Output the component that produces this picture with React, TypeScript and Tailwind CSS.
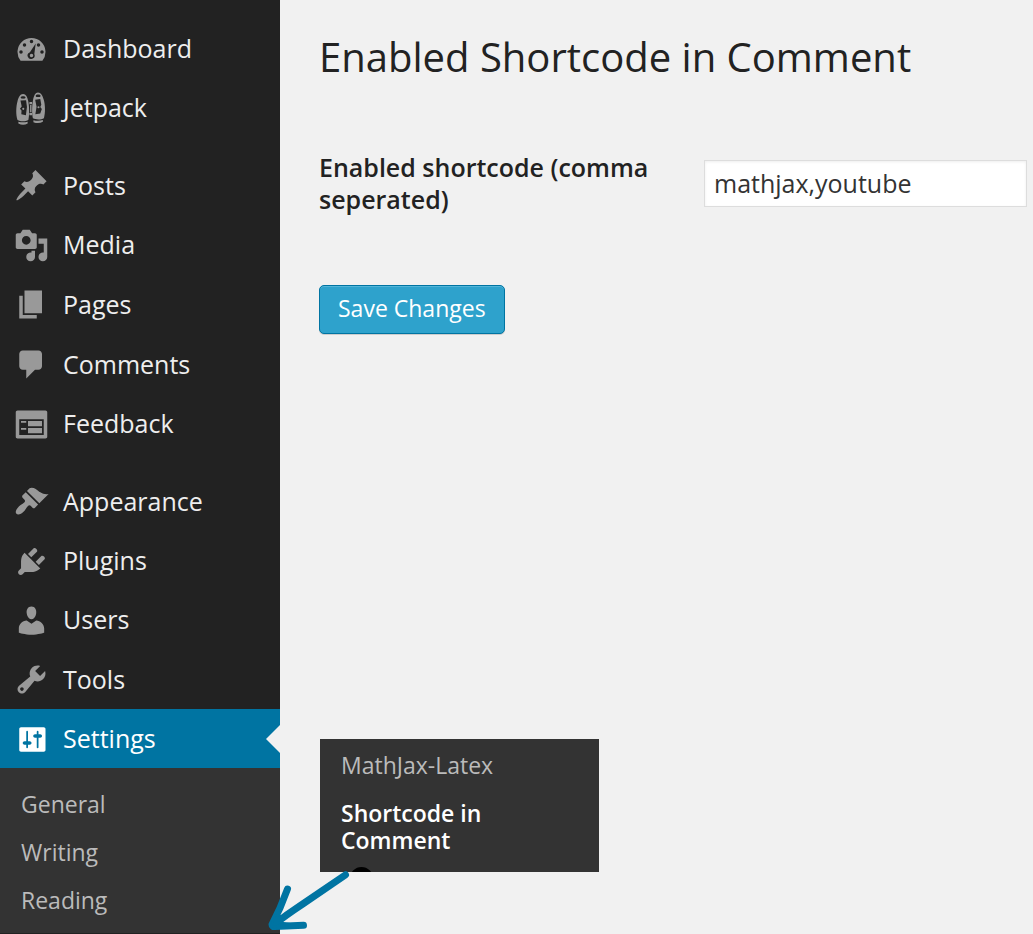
import React from "react";

const icons: Record<string, string> = {
  Dashboard:
    "M3.76 17h12.48A8 8 0 1 0 3.76 17zM10 5a1 1 0 1 1 0 2 1 1 0 0 1 0-2zM6 7a1 1 0 1 1 0 2 1 1 0 0 1 0-2zM14 7a1 1 0 1 1 0 2 1 1 0 0 1 0-2zM4 11a1 1 0 1 1 0 2 1 1 0 0 1 0-2zM16 11a1 1 0 1 1 0 2 1 1 0 0 1 0-2zM12.4 7.2L11.6 13.2a2 2 0 1 1-2.500-1.100zM10 13a1 1 0 1 0 0 2 1 1 0 0 0 0-2z",
  Jetpack:
    "M5.2 1.700C3.400 1.700 2.600 3.600 2 5.800C1.100 9 1 13.800 2 16.500C3.600 17.500 6.600 17.500 8.200 16.500C8.700 14.800 8.900 10 8.200 6C7.700 3.400 6.800 1.700 5.200 1.700zM3.800 3.700C3.900 2.700 6.500 2.700 6.600 3.700C6.600 4.600 3.800 4.600 3.800 3.700zM3.700 5.400L6.900 5.300L7.400 9.200L6.800 13.900L4.200 13.300L4.300 11.200L3.400 10.200L4.400 8.900z" +
    "M13.700 .8C12.200 .8 11.400 2.600 10.900 5C10.200 8.500 10.200 13.300 10.800 15.600C12.600 16.500 15.600 16.500 17.100 15.500C18 12.600 17.900 8 17 5C16.300 2.400 15.400 .8 13.700 .8zM12.400 2.800C12.500 1.800 15.100 1.800 15.200 2.800C15.200 3.700 12.400 3.700 12.400 2.800zM12.100 5L15 4.600L15.600 7.800L15 9.200L15.900 10.300L15 12.800L12.200 13.300L12.900 9z" +
    "M5.300 9.600a.6.6 0 1 1 0 1.200.6.6 0 0 1 0-1.200zM14 8.700a.6.6 0 1 1 0 1.200.6.6 0 0 1 0-1.200zM8.800 6.300h1.500v1.300H8.800zM9.200 8h.8v4.200h-.8zM8.800 12.600h1.500v1.300H8.800zM2.500 17.500Q5.200 18.300 7.800 17.500V18.500Q5.200 20 2.500 18.500zM11.100 16.700Q14 17.400 16.500 16.600V17.600Q14 18.900 11.100 17.800z",
  Posts:
    "M10.44 3.02l1.82-1.82 6.36 6.35-1.83 1.82c-1.05-.68-2.48-.57-3.41.36l-.75.75c-.92.93-1.04 2.35-.35 3.41l-1.83 1.82-2.41-2.41-2.8 2.79c-.42.42-3.38 2.71-3.8 2.29s1.86-3.39 2.28-3.81l2.79-2.79L4.1 9.36l1.83-1.82c1.05.69 2.48.57 3.4-.36l.75-.75c.93-.92 1.05-2.35.36-3.41z",
  Media:
    "M13 11V4c0-.55-.45-1-1-1h-1.67L9 1H5L3.67 3H2c-.55 0-1 .45-1 1v7c0 .55.45 1 1 1h10c.55 0 1-.45 1-1zM7 4.5c1.38 0 2.5 1.12 2.5 2.5S8.38 9.5 7 9.5 4.5 8.38 4.5 7 5.62 4.5 7 4.5zM14 6h5v10.500c0 1.380-1.120 2.500-2.500 2.500S14 17.880 14 16.500s1.120-2.500 2.500-2.500c.17 0 .34.02.5.05V9h-3V6zM10 14.050V13h2v3.500c0 1.380-1.120 2.500-2.500 2.500S7 17.880 7 16.500 8.120 14 9.500 14c.17 0 .34.02.5.05z",
  Pages: "M6 15V2h10v13H6zm-1 1h8v2H3V5h2v11z",
  Comments:
    "M5 2h9c1.1 0 2 .9 2 2v7c0 1.1-.9 2-2 2h-2l-5 5v-5H5c-1.1 0-2-.9-2-2V4c0-1.1.9-2 2-2z",
  Feedback:
    "M2 2h16c.55 0 1 .45 1 1v14c0 .55-.45 1-1 1H2c-.55 0-1-.45-1-1V3c0-.55.45-1 1-1zm15 14V7H3v9h14zM4 8v1h3V8H4zm4 0v3h8V8H8zm-4 4v1h3v-1H4zm4 0v3h8v-3H8z",
  Appearance:
    "M14.48 11.06L7.41 3.99l1.5-1.5c.5-.56 2.3-.47 3.51.32 1.21.8 1.43 1.28 2.91 2.1 1.18.64 2.45 1.26 4.45.85zm-.71.71L6.7 4.7 4.93 6.47c-.39.39-.39 1.02 0 1.41l1.06 1.06c.39.39.39 1.03 0 1.42-.6.6-1.43 1.11-2.21 1.69-.35.26-.7.53-1.01.84C1.43 14.23.4 16.08 1.4 17.07c.99 1 2.84-.03 4.18-1.36.31-.31.58-.66.85-1.02.57-.78 1.08-1.61 1.69-2.21.39-.39 1.02-.39 1.41 0l1.06 1.06c.39.39 1.02.39 1.41 0z",
  Plugins:
    "M13.11 4.36L9.87 7.6 8 5.73l3.24-3.24c.35-.34 1.05-.2 1.56.32.52.51.66 1.21.31 1.55zm-8 1.77l.91-1.12 9.01 9.01-1.19.84c-.71.71-2.63 1.16-3.82 1.16H6.14L4.9 17.26c-.59.59-1.54.59-2.12 0-.59-.58-.59-1.53 0-2.12l1.24-1.24v-3.88c0-1.13.4-3.19 1.09-3.89zm7.26 3.97l3.24-3.24c.34-.35 1.04-.21 1.55.31.52.51.66 1.21.31 1.55l-3.24 3.25z",
  Users:
    "M10 9.25c-2.27 0-2.73-3.44-2.73-3.44C7 4.02 7.82 2 9.97 2c2.16 0 2.98 2.02 2.71 3.81 0 0-.41 3.44-2.68 3.44zm0 2.57L12.72 10c2.39 0 4.52 2.33 4.52 4.53v2.49s-3.65 1.13-7.24 1.13c-3.65 0-7.24-1.13-7.24-1.13v-2.49c0-2.25 1.94-4.48 4.47-4.48z",
  Tools:
    "M16.68 9.77c-1.34 1.34-3.3 1.67-4.95.99l-5.41 6.52c-.99.99-2.59.99-3.58 0s-.99-2.59 0-3.57l6.52-5.42c-.68-1.65-.35-3.61.99-4.95 1.28-1.28 3.12-1.62 4.72-1.06l-2.89 2.89 2.82 2.82 2.86-2.87c.53 1.58.18 3.39-1.08 4.65zM3.81 16.21c.4.39 1.04.39 1.43 0 .4-.4.4-1.04 0-1.43-.39-.4-1.03-.4-1.43 0-.39.39-.39 1.03 0 1.43z",
  Settings:
    "M18 16V4c0-.55-.45-1-1-1H4c-.55 0-1 .45-1 1v12c0 .55.45 1 1 1h13c.55 0 1-.45 1-1zM8 11h1c.55 0 1 .45 1 1s-.45 1-1 1H8v1.5c0 .28-.22.5-.5.5s-.5-.22-.5-.5V13H6c-.55 0-1-.45-1-1s.45-1 1-1h1V5.5c0-.28.22-.5.5-.5s.5.22.5.5V11zm5-2h-1c-.55 0-1-.45-1-1s.45-1 1-1h1V5.5c0-.28.22-.5.5-.5s.5.22.5.5V7h1c.55 0 1 .45 1 1s-.45 1-1 1h-1v5.5c0 .28-.22.5-.5.5s-.5-.22-.5-.5V9z",
};

function MenuItem({ name, active = false }: { name: string; active?: boolean }) {
  return (
    <li className={active ? "relative bg-[#0074a2] text-white" : "text-[#eeeeee]"}>
      <a href="#" aria-current={active ? "page" : undefined} className="flex h-full items-center gap-[14px] pl-[14px]">
        <svg
          viewBox="0 0 20 20"
          className={active ? "mt-0.5 size-[35px] shrink-0 fill-white" : "mt-0.5 size-[35px] shrink-0 fill-[#999999]"}
          aria-hidden="true"
        >
          <path fillRule="evenodd" d={icons[name]} />
        </svg>
        <span>{name}</span>
      </a>
      {active && (
        <svg viewBox="0 0 14 28" className="absolute top-4 right-0 h-7 w-[14px] fill-[#f1f1f1]" aria-hidden="true">
          <path d="M14 0v28L0 14z" />
        </svg>
      )}
    </li>
  );
}

function Sidebar() {
  return (
    <nav aria-label="Main menu" className="w-[280px] shrink-0 bg-[#222222] pt-[18px] text-[25px] leading-8">
      <div className="flex flex-col gap-[18px]">
        <ul className="grid h-[119px] auto-rows-fr">
          {["Dashboard", "Jetpack"].map((n) => (
            <MenuItem key={n} name={n} />
          ))}
        </ul>
        <ul className="grid h-[298px] auto-rows-fr">
          {["Posts", "Media", "Pages", "Comments", "Feedback"].map((n) => (
            <MenuItem key={n} name={n} />
          ))}
        </ul>
        <ul className="grid h-[297px] auto-rows-fr">
          {["Appearance", "Plugins", "Users", "Tools", "Settings"].map((n) => (
            <MenuItem key={n} name={n} active={n === "Settings"} />
          ))}
        </ul>
      </div>
      <ul className="bg-[#333333] pt-3 pb-[9px] text-[23px] text-[#bbbbbb]">
        {["General", "Writing", "Reading"].map((n) => (
          <li key={n}>
            <a href="#" className="flex h-12 items-center pl-[21px]">
              {n}
            </a>
          </li>
        ))}
      </ul>
    </nav>
  );
}

function Callout() {
  return (
    <aside className="absolute top-[739px] left-[320px] w-[279px] overflow-hidden bg-[#333333] text-[23px] leading-[27px]">
      <ul className="flex flex-col gap-[21px] px-[21px] pt-[13px] pb-[18px]">
        <li>
          <a href="#" className="text-[#bbbbbb]">
            MathJax-Latex
          </a>
        </li>
        <li>
          <a href="#" className="block font-semibold text-white">
            Shortcode in Comment
          </a>
        </li>
      </ul>
      <span className="absolute top-32 left-[30px] size-[23px] rounded-full bg-black" />
    </aside>
  );
}

function Arrow() {
  return (
    <svg
      viewBox="260 866 100 68"
      className="absolute top-[866px] left-[260px] h-[68px] w-[100px] fill-none stroke-[#0074a2]"
      strokeWidth="7"
      strokeLinecap="round"
      strokeLinejoin="round"
      aria-hidden="true"
    >
      <path d="M345.500 874.800L302 904.500Q286 915 273.500 925M287.500 889L280 908L272 924.500Q272 927 275 926.500L303.500 925.300" />
      <path className="fill-[#0074a2]" strokeWidth="2" d="M275 915L271 927L290 924L280 922.500L284 917z" />
    </svg>
  );
}

export default function App() {
  return (
    <div className="relative flex min-h-screen overflow-hidden bg-[#f1f1f1] font-['Open_Sans',sans-serif] text-[#222222]">
      <Sidebar />
      <main className="min-w-0 flex-1 pt-8 pr-[6px] pl-[39px]">
        <h1 className="text-[40px] leading-[50px]">Enabled Shortcode in Comment</h1>
        <form className="pt-[69px]" onSubmit={(e) => e.preventDefault()}>
          <div className="flex items-center">
            <label htmlFor="shortcodes" className="w-[385px] shrink-0 pr-9 text-[25px] leading-8 font-semibold">
              Enabled shortcode (comma seperated)
            </label>
            <input
              id="shortcodes"
              type="text"
              defaultValue="mathjax,youtube"
              className="h-[47px] min-w-0 flex-1 border border-[#dddddd] bg-white px-[9px] text-[25px] text-[#333333] shadow-[inset_0_1px_3px_rgba(0,0,0,0.07)]"
            />
          </div>
          <button
            type="submit"
            className="mt-[70px] h-[49px] rounded-[5px] border border-[#0074a2] bg-[#2ea2cc] px-[18px] pb-0.5 text-[23px] text-white shadow-[inset_0_1px_0_rgba(120,200,230,0.5),0_1px_0_rgba(0,0,0,0.15)]"
          >
            Save Changes
          </button>
        </form>
      </main>
      <Callout />
      <Arrow />
    </div>
  );
}
